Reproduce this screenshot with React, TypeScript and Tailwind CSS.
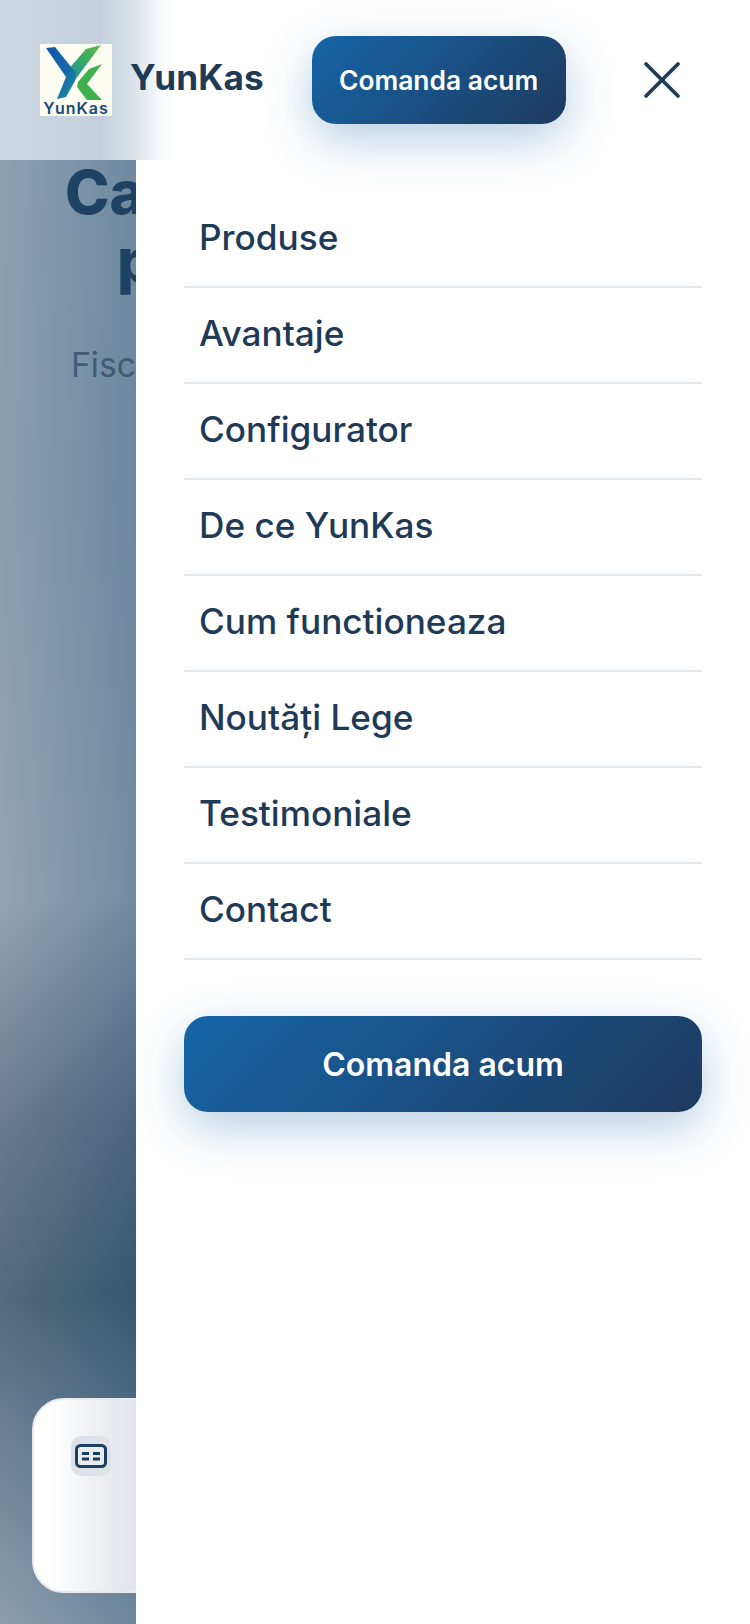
import { X } from "lucide-react";

const LINKS = ["Produse", "Avantaje", "Configurator", "De ce YunKas", "Cum functioneaza", "Noutăți Lege", "Testimoniale", "Contact"];

function Logo() {
  return (
    <div className="w-[72px] h-[72px] shrink-0 bg-[#fdfdf2] relative overflow-hidden">
      <svg viewBox="0 0 72 72" className="w-[72px] h-[72px]">
        <defs>
          <linearGradient id="ykBlue" x1="0" y1="0" x2="0.9" y2="1">
            <stop offset="0" stopColor="#1257a8" />
            <stop offset="0.6" stopColor="#1668a8" />
            <stop offset="1" stopColor="#1f8fa0" />
          </linearGradient>
          <linearGradient id="ykGreen" x1="0" y1="1" x2="1" y2="0">
            <stop offset="0" stopColor="#1f8fa0" />
            <stop offset="0.5" stopColor="#35a868" />
            <stop offset="1" stopColor="#5cbd45" />
          </linearGradient>
        </defs>
        <path d="M61 1 L46 5 L27 27 L35 36 Z" fill="url(#ykGreen)" />
        <path d="M6 4 L15 3 L36 29 L35 37 L26 53 L17 55 L26 33 Z" fill="url(#ykBlue)" />
        <path d="M62 20 L49 25 L38 38 L37 43 L47 56 L62 56 L47 40 Z" fill="#3fb24f" />
      </svg>
      <span className="absolute left-0 right-0 bottom-[-1px] text-center text-[16px] leading-[18px] tracking-[1px] font-semibold text-[#1c4a78] font-['Inter',sans-serif]">YunKas</span>
    </div>
  );
}

export default function App() {
  return (
    <div className="relative w-[750px] h-[1624px] overflow-hidden font-['Inter',sans-serif] bg-white">
      {/* page behind the drawer */}
      <div className="absolute inset-0 bg-[linear-gradient(90deg,rgba(255,255,255,0.12)_0px,rgba(40,90,130,0.18)_136px,rgba(40,90,130,0.18)_100%),linear-gradient(177deg,#7f95a8_0px,#7b91a5_500px,#8497a9_900px,#55697f_1120px,#3b5669_1300px,#51697f_1400px,#7c91a3_1624px)]">
        <div className="w-[136px] h-full overflow-hidden flex flex-col pt-[156px]">
          <h1 className="pl-[65px] text-[60px] leading-[73px] font-extrabold text-[#1e4263] whitespace-nowrap">Casa</h1>
          <h1 className="pl-[117px] -mt-[5px] text-[60px] leading-[73px] font-extrabold text-[#1e4263] whitespace-nowrap">pentru</h1>
          <p className="pl-[71px] mt-[44px] text-[33.6px] leading-[48px] text-[#425a74] whitespace-nowrap">Fiscalizare</p>
          <div className="ml-[32px] mt-auto mb-[31px] w-[400px] h-[195px] shrink-0 rounded-[32px] border-2 border-[#e7ebef] bg-[linear-gradient(90deg,#ffffff_15px,#dfe3e9_104px)] pl-[37px] pt-[36px]">
            <div className="w-[40px] h-[40px] rounded-[10px] bg-[#dde2e8] flex items-center justify-center">
              <svg viewBox="0 0 32 24" className="w-[32px] h-[24px]" fill="#e9edf1" stroke="#1c3f5f">
                <rect x="1.5" y="1.5" width="29" height="21" rx="4" strokeWidth="3" />
                <path d="M7 9.5h7M18 9.5h7M7 15h7M18 15h7" strokeWidth="2.8" />
              </svg>
            </div>
          </div>
        </div>
      </div>

      {/* drawer */}
      <div className="absolute left-[136px] top-0 bottom-0 right-0 bg-white pt-[192px] px-[48px]">
        <nav className="flex flex-col">
          {LINKS.map((l) => (
            <a key={l} className="h-[96px] border-b-2 border-[#e1e7eb] pl-[15px] pb-[4px] flex items-center text-[35.2px] font-[450] text-[#1e3a56]">{l}</a>
          ))}
        </nav>
        <button className="mt-[56px] w-full h-[96px] pt-[2px] rounded-[24px] bg-[linear-gradient(135deg,#1565a8_0%,#1e3a5f_100%)] text-white text-[32px] font-semibold shadow-[0_16px_48px_rgba(21,94,158,0.3)]">Comanda acum</button>
      </div>

      {/* header */}
      <div className="absolute top-0 left-0 right-0 h-[160px] bg-[linear-gradient(90deg,#cdd8e2_0px,#c3d0dc_100px,#dbe3ea_135px,#f6f8fa_160px,#ffffff_175px)] flex items-center pl-[40px]">
        <Logo />
        <span className="ml-[18px] mb-[6px] text-[35.2px] font-bold text-[#1e3a56]">YunKas</span>
        <button className="ml-[48px] w-[254px] h-[88px] pt-[2px] shrink-0 rounded-[24px] bg-[linear-gradient(135deg,#1565a8_0%,#1e3a5f_100%)] text-white text-[26.4px] font-semibold shadow-[0_16px_48px_rgba(21,94,158,0.3)]">Comanda acum</button>
        <X className="ml-[64px] shrink-0 text-[#1e3a56]" size={64} strokeWidth={1.4} />
      </div>
    </div>
  );
}
